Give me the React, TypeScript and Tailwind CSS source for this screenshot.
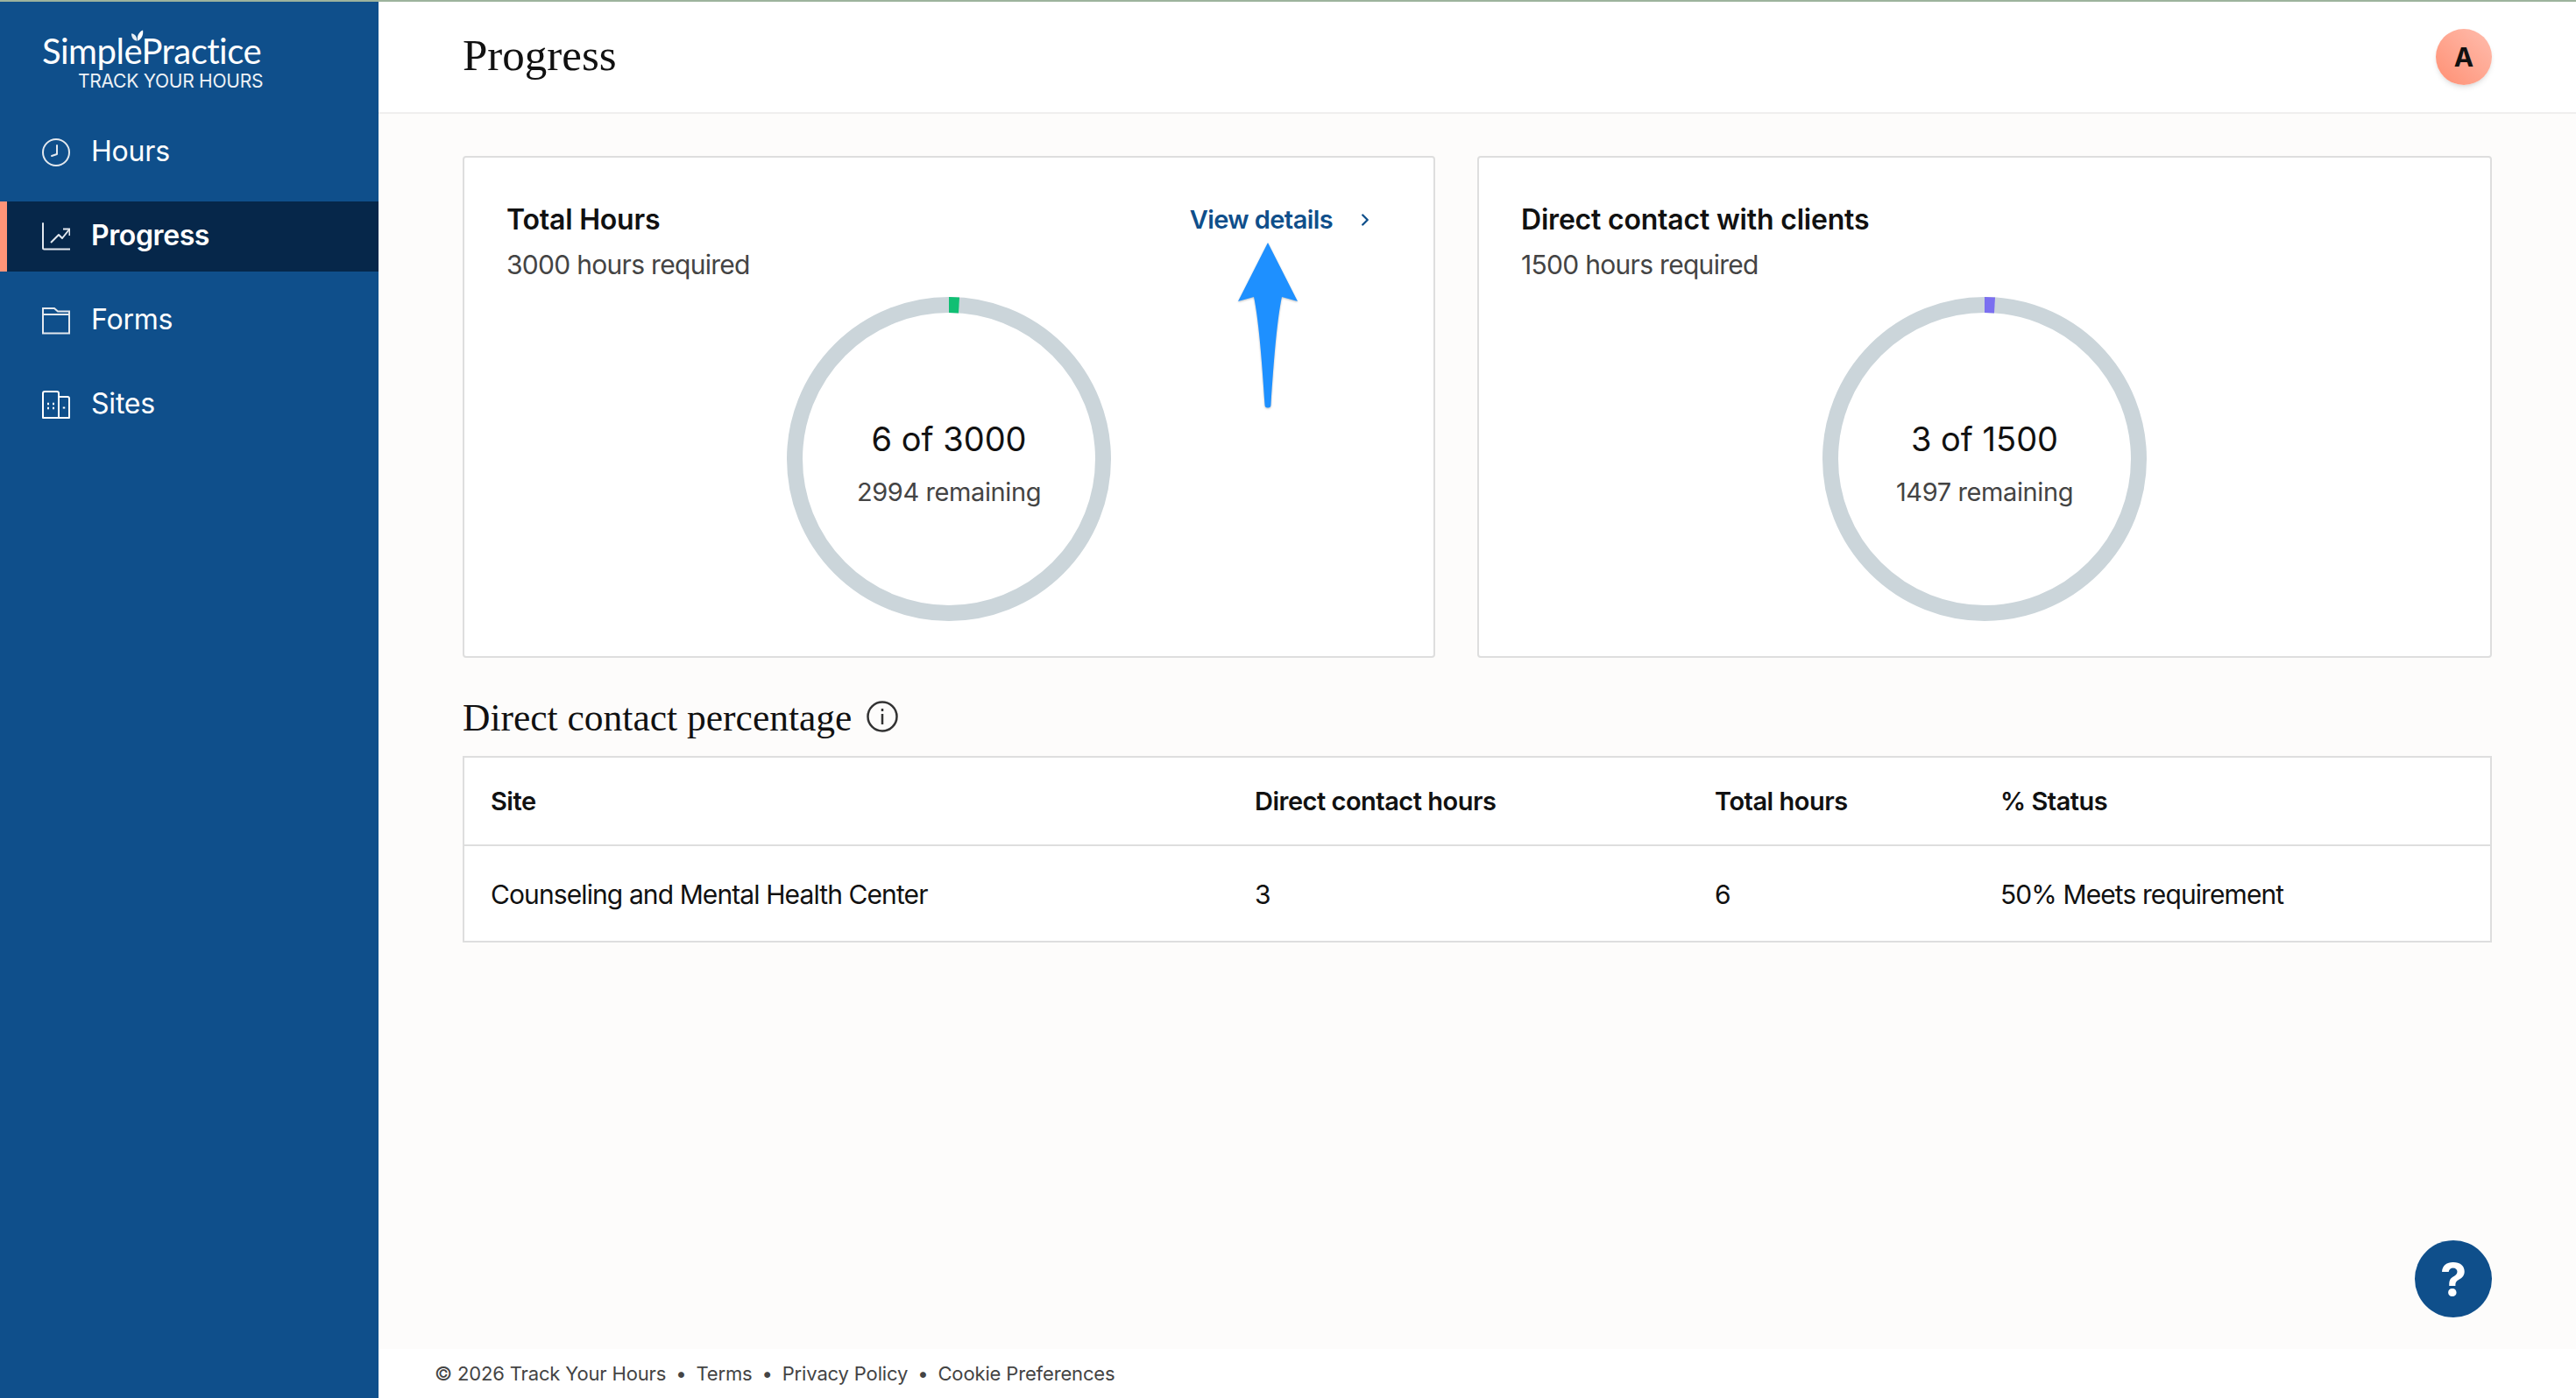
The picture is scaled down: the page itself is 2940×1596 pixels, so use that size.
import { ChevronRight } from 'lucide-react';

const SANS = "font-['Inter','Liberation_Sans',sans-serif]";

function ClockIcon() {
  return (
    <svg viewBox="0 0 32 32" className="w-8 h-8" fill="none" stroke="#e3e8ee" strokeWidth="2" strokeLinecap="round" strokeLinejoin="round">
      <circle cx="16" cy="16" r="15" />
      <path d="M17 8v10l-6 2" />
    </svg>
  );
}

function ChartIcon() {
  return (
    <svg viewBox="0 0 32 32" className="w-8 h-8" fill="none" stroke="#e3e8ee" strokeWidth="2" strokeLinejoin="round">
      <path d="M1 1v28a1.500 1.500 0 0 0 1.500 1.500H32" strokeLinecap="round" />
      <path d="M10 23l9-9 4 4 8-10" />
      <path d="M24 7.500h7.500V15" />
    </svg>
  );
}

function FolderIcon() {
  return (
    <svg viewBox="0 0 32 32" className="w-8 h-8" fill="none" stroke="#e3e8ee" strokeWidth="2">
      <path d="M1 30.500V2h13l4 3.500h13V30.500z" />
      <path d="M1 9h30" />
    </svg>
  );
}

function BuildingIcon() {
  return (
    <svg viewBox="0 0 32 32" className="w-8 h-8" fill="none" stroke="#ffffff" strokeWidth="2" strokeLinejoin="round">
      <path d="M1 31V3a2 2 0 0 1 2-2h14a2 2 0 0 1 2 2v28z" />
      <path d="M19 7h10a2 2 0 0 1 2 2v22H19z" />
      <path d="M6 15h2M12 15h2M6 20h2M12 20h2M25 18.500v2" strokeWidth="2.500" />
    </svg>
  );
}

const NAV = [
  { label: 'Hours', icon: <ClockIcon /> },
  { label: 'Progress', icon: <ChartIcon />, active: true },
  { label: 'Forms', icon: <FolderIcon /> },
  { label: 'Sites', icon: <BuildingIcon /> },
];

function Sidebar() {
  return (
    <aside className="w-[432px] shrink-0 bg-[#0f4f8b] text-white">
      <div className="relative h-[132px] pl-12 pt-[33px]">
        <div className="font-['Lato',sans-serif] text-[40px] leading-[46px] tracking-[-0.5px] text-white">SimplePractice</div>
        {/* leaf above the logo's "e" */}
        <svg viewBox="0 0 16 16" className="absolute left-[149px] top-[32px] w-[15px] h-[16px]" fill="#ffffff">
          <path d="M15 0c1 6-2 11-6 13C7 8 10 2 15 0z" />
          <path d="M1 4c3 0 7 3 7 9C4 13 1 9 1 4z" opacity="0.9" />
        </svg>
        <div className={`${SANS} pl-[41px] -mt-[1px] text-[21px] leading-[25px] tracking-[-0.25px] text-[#eef2f6]`}>TRACK YOUR HOURS</div>
      </div>
      <nav className="flex flex-col gap-4">
        {NAV.map((item) => (
          <div
            key={item.label}
            className={`h-20 flex items-center ${item.active ? 'bg-[#06274a] border-l-8 border-[#ff9478] pl-10' : 'pl-12'}`}
          >
            {item.icon}
            <span className={`${SANS} ml-[24px] text-[32px] leading-none -mt-[2px] ${item.active ? 'font-semibold tracking-[-0.4px]' : 'tracking-[-0.2px]'}`}>{item.label}</span>
          </div>
        ))}
      </nav>
    </aside>
  );
}

function Ring({ of, remaining, total, color }: { of: string; remaining: string; total: string; color: string }) {
  return (
    <div className="relative w-[370px] h-[370px] mx-auto">
      <svg viewBox="0 0 370 370" className="w-[370px] h-[370px]" fill="none">
        <circle cx="185" cy="185" r="176" stroke="#cbd5da" strokeWidth="18" />
        <path d="M185 0L197 0.500L196 18.500L185 18z" fill={color} />
      </svg>
      <div className="absolute inset-0 flex flex-col items-center pt-[135px]">
        <div className="text-[38px] leading-[54px] text-[#111111]">{of} of {total}</div>
        <div className="mt-[14px] text-[29px] leading-[40px] tracking-[-0.4px] text-[#444444]">{remaining} remaining</div>
      </div>
    </div>
  );
}

function HoursCard({ title, required, of, total, remaining, color, link, className }: {
  title: string;
  required: string;
  of: string;
  total: string;
  remaining: string;
  color: string;
  link?: boolean;
  className: string;
}) {
  return (
    <div className={`h-[573px] bg-white border-2 border-[#dedede] rounded pt-[50px] ${className}`}>
      <div className="flex items-start justify-between pl-12 pr-[67px]">
        <div>
          <div className="text-[32px] leading-[42px] font-semibold tracking-[-0.2px] text-[#111111]">{title}</div>
          <div className="mt-[9px] text-[30px] leading-[42px] tracking-[-0.7px] text-[#444444]">{required}</div>
        </div>
        {link && (
          <div className="flex items-center h-[42px] text-[#0f4f8b] font-semibold text-[29px] tracking-[-0.6px]">
            View details
            <ChevronRight className="ml-[26px] w-[22px] h-[22px]" strokeWidth={2.500} />
          </div>
        )}
      </div>
      <div className="mt-[16px]">
        <Ring of={of} total={total} remaining={remaining} color={color} />
      </div>
    </div>
  );
}

export default function App() {
  return (
    <div className={`${SANS} w-screen h-screen flex flex-col overflow-hidden bg-white`}>
      <div className="h-[2px] bg-[#9db39d] shrink-0" />
      <div className="flex flex-1 min-h-0">
        <Sidebar />
        <div className="flex-1 flex flex-col min-w-0">
          <header className="h-[128px] shrink-0 bg-white border-b-2 border-[#f0efee] flex items-center justify-between pl-24 pr-24">
            <h1 className="font-['Liberation_Serif',serif] text-[51px] leading-none text-[#111111] -mt-[3px]">Progress</h1>
            <div className="w-16 h-16 rounded-full bg-gradient-to-tr from-[#ff8f73] to-[#ffbdae] shadow-md flex items-center justify-center text-[30px] font-bold text-[#111111]">A</div>
          </header>

          <main className="relative flex-1 bg-[#fdfcfb] px-24 pt-12">
            <div className="flex gap-12">
              <HoursCard className="w-[1110px]" title="Total Hours" required="3000 hours required" of="6" total="3000" remaining="2994" color="#10bf73" link />
              <HoursCard className="flex-1" title="Direct contact with clients" required="1500 hours required" of="3" total="1500" remaining="1497" color="#7b6ff0" />
            </div>

            {/* arrow annotation over the card */}
            <svg viewBox="0 0 68 190" className="absolute left-[981px] top-[147px] w-[68px] h-[190px] drop-shadow-[0_1px_1px_rgba(0,0,0,0.25)]" fill="#1e90ff">
              <path d="M34 0L68 67L50 62C45 85 41 130 37.500 185a3.500 3.500 0 0 1-7 0C27 130 23 85 18 62L0 67z" />
            </svg>

            <div className="flex items-center mt-[46px] h-[46px]">
              <h2 className="font-['Liberation_Serif',serif] text-[43.500px] leading-none text-[#111111]">Direct contact percentage</h2>
              <svg viewBox="0 0 36 36" className="ml-[17px] -mt-[4px] w-9 h-9" fill="none" stroke="#333333" strokeWidth="2.500">
                <circle cx="18" cy="18" r="16.500" />
                <path d="M18 15v12M18 9v3" />
              </svg>
            </div>

            <div className="mt-[20px] border-2 border-[#dedede] bg-white">
              <div className="grid grid-cols-[872px_525px_326px_1fr] pl-[30px] h-[101px] items-center border-b-2 border-[#dedede] text-[29px] font-semibold tracking-[-0.5px] text-[#111111]">
                <div>Site</div>
                <div>Direct contact hours</div>
                <div>Total hours</div>
                <div>% Status</div>
              </div>
              <div className="grid grid-cols-[872px_525px_326px_1fr] pl-[30px] h-[108px] items-center text-[30px] tracking-[-0.9px] text-[#111111]">
                <div className="pt-[2px]">Counseling and Mental Health Center</div>
                <div className="pt-[2px]">3</div>
                <div className="pt-[2px]">6</div>
                <div className="pt-[2px]">50% Meets requirement</div>
              </div>
            </div>

            <button className="absolute right-24 bottom-9 w-[88px] h-[88px] rounded-full bg-[#0f4f8b] text-white text-[54px] font-bold flex items-center justify-center">?</button>
          </main>

          <footer className="h-14 shrink-0 bg-white flex items-center pl-16 text-[22px] tracking-[-0.15px] text-[#444444]">
            <span>© 2026 Track Your Hours</span>
            <span className="mx-[11px]">•</span>
            <span>Terms</span>
            <span className="mx-[11px]">•</span>
            <span>Privacy Policy</span>
            <span className="mx-[11px]">•</span>
            <span>Cookie Preferences</span>
          </footer>
        </div>
      </div>
    </div>
  );
}
